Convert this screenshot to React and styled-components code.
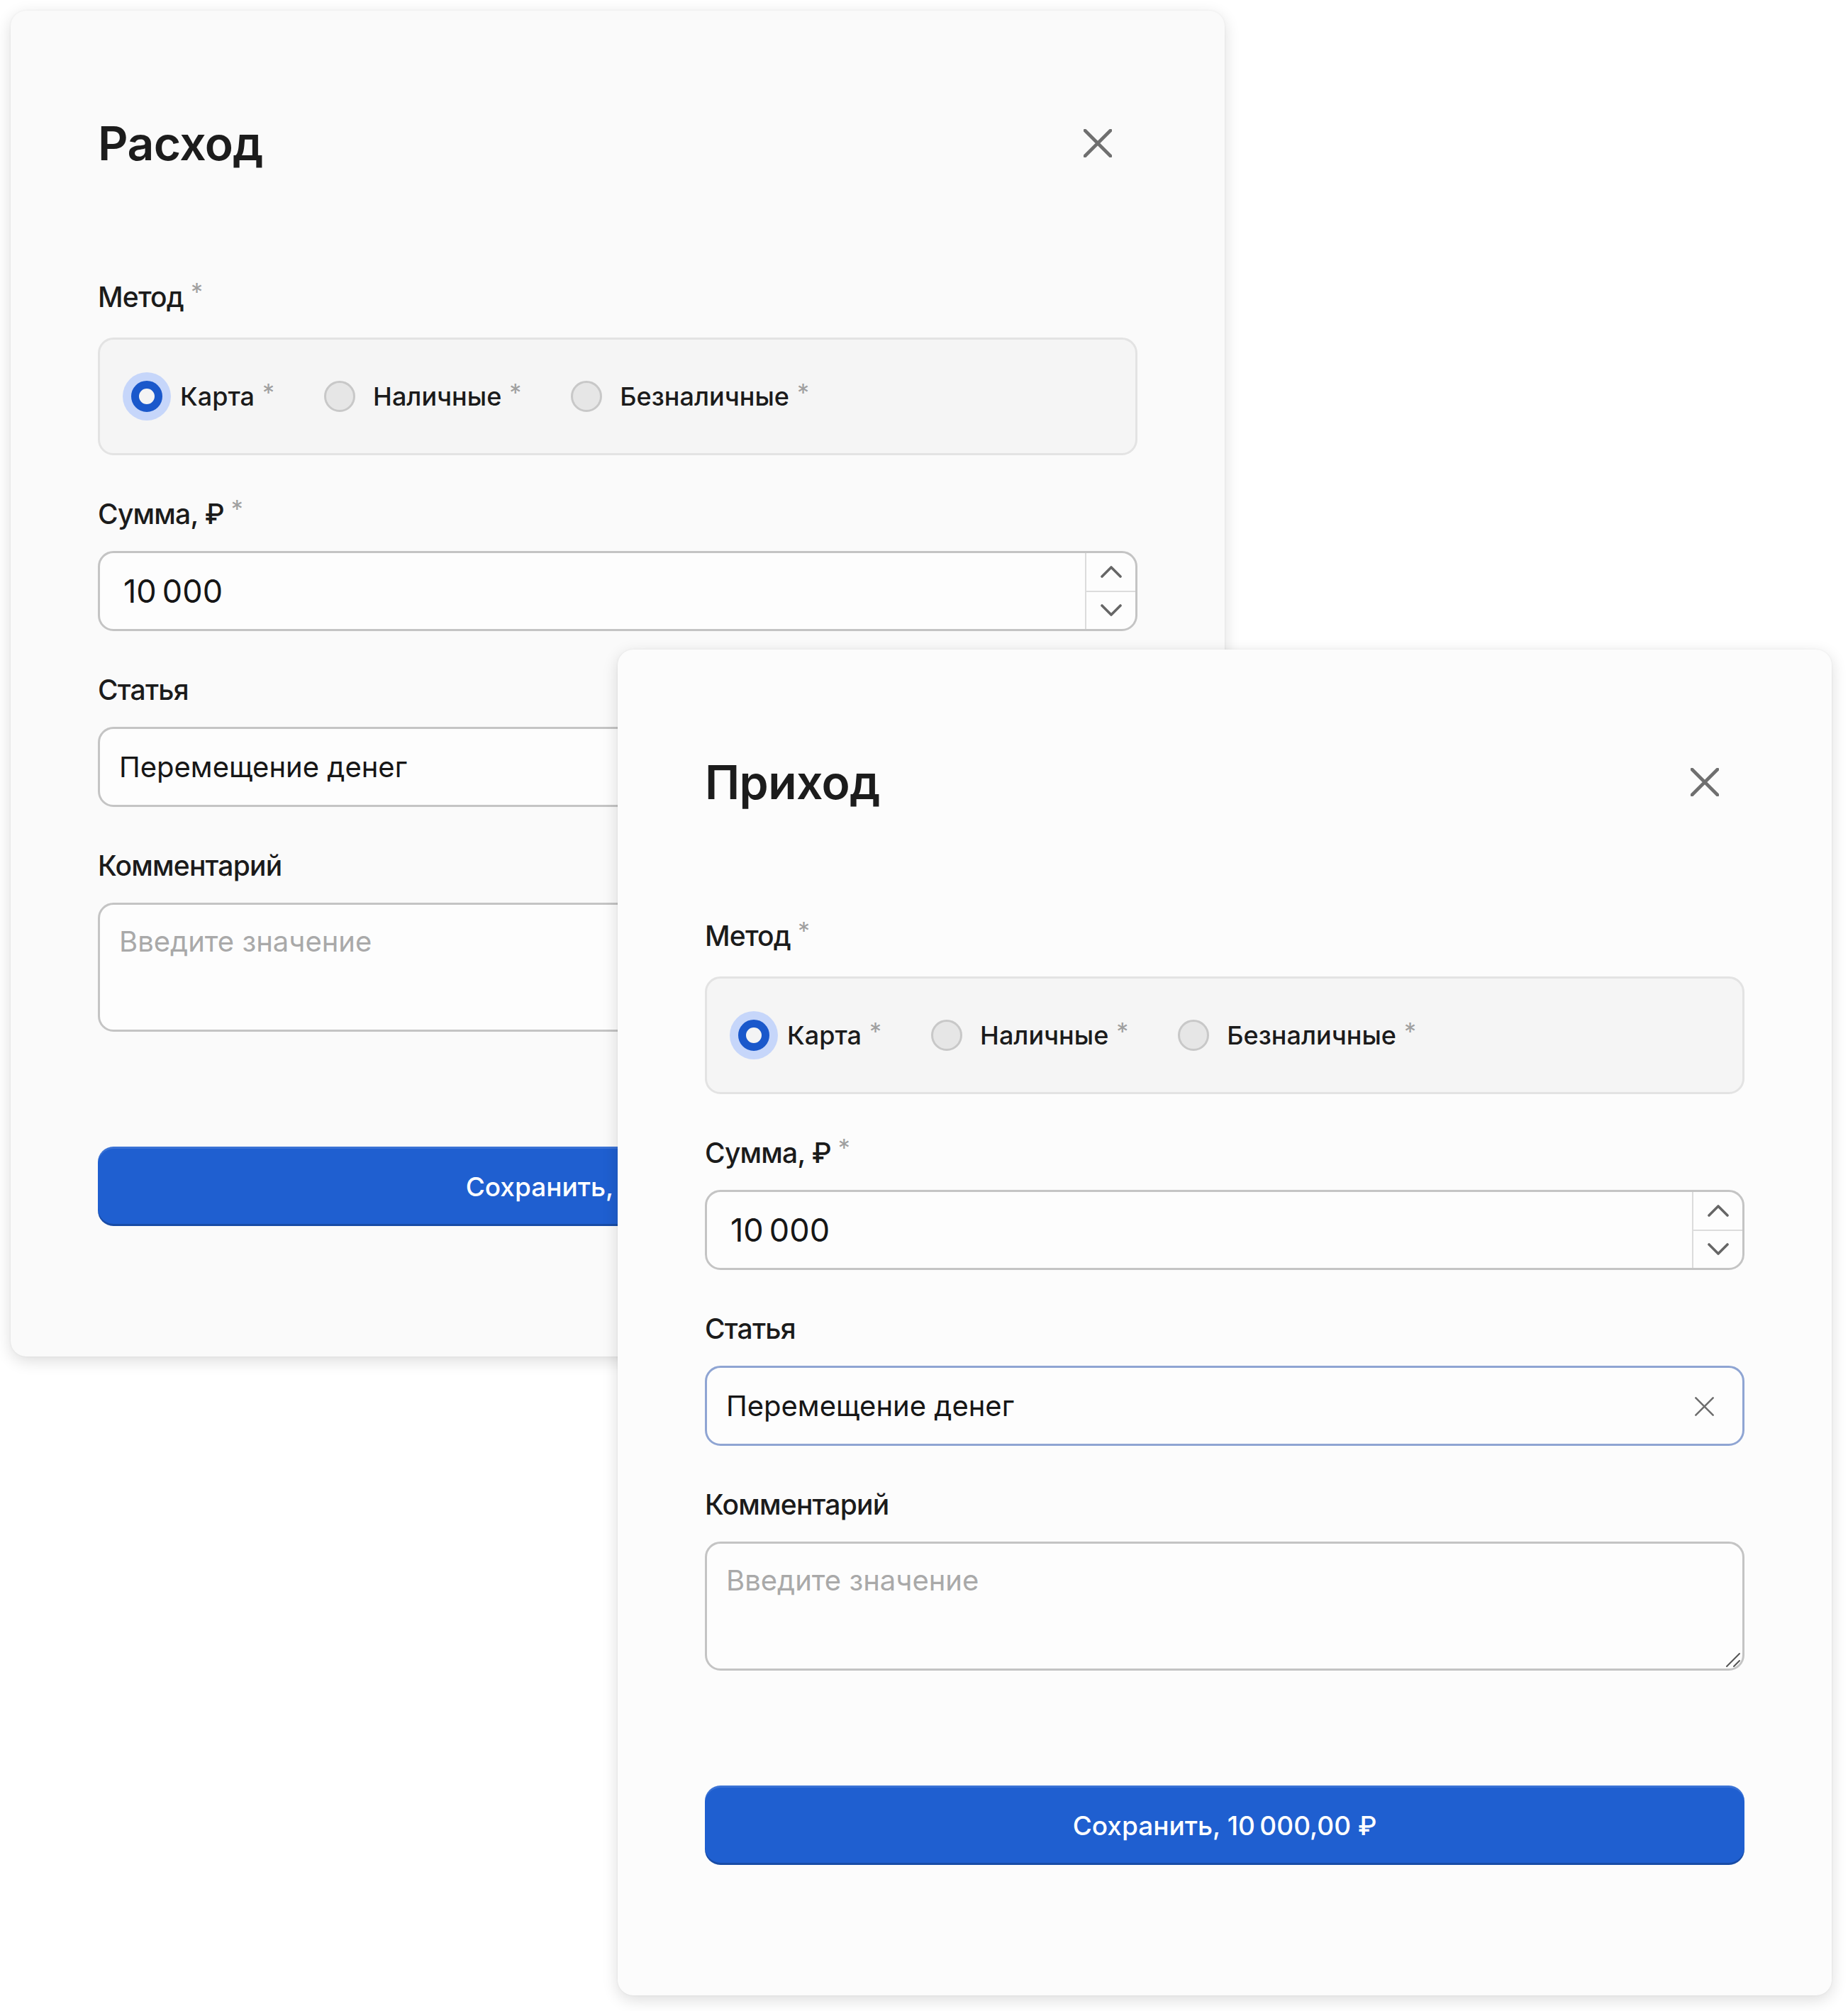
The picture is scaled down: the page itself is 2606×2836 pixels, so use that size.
import React from "react";
import styled, { createGlobalStyle } from "styled-components";

const GlobalStyle = createGlobalStyle`
  html, body {
    margin: 0;
    padding: 0;
    background: #ffffff;
  }
  body {
    font-family: Inter, "Noto Sans", "Liberation Sans", sans-serif;
    color: #1b1b1b;
  }
  * {
    box-sizing: border-box;
  }
`;

const Desk = styled.div`
  position: relative;
  width: 2606px;
  height: 2836px;
  overflow: hidden;
  background: #ffffff;
`;

const Window = styled.section`
  position: absolute;
  left: ${(p) => p.$x}px;
  top: ${(p) => p.$y}px;
  z-index: ${(p) => p.$z};
  width: 1712px;
  height: 1898px;
  padding: 131px 123px 0;
  display: flex;
  flex-direction: column;
  background: ${(p) => p.$bg};
  border-radius: 22px;
  box-shadow: 0 6px 22px rgba(0, 0, 0, 0.14), 0 0 3px rgba(0, 0, 0, 0.06);
`;

const Header = styled.header`
  height: 112px;
  margin-bottom: 137px;
  display: flex;
  align-items: center;
  justify-content: space-between;
`;

const Title = styled.h2`
  margin: 0;
  font-size: 66px;
  font-weight: 600;
  letter-spacing: -0.6px;
  color: #1c1c1c;
`;

const IconButton = styled.button`
  width: ${(p) => p.$size}px;
  height: ${(p) => p.$size}px;
  padding: 0;
  border: 0;
  background: none;
  display: flex;
  align-items: center;
  justify-content: center;
  color: #6f6f6f;
  cursor: pointer;
`;

const Fields = styled.div`
  display: flex;
  flex-direction: column;
  gap: 59px;
`;

const Field = styled.div`
  display: flex;
  flex-direction: column;
  gap: ${(p) => p.$gap || 28}px;
`;

const Label = styled.label`
  font-size: 39px;
  line-height: 48px;
  font-weight: 500;
  letter-spacing: -0.8px;
  color: #1b1b1b;
`;

const Req = styled.span`
  margin-left: ${(p) => p.$gap || 10}px;
  font-size: 34px;
  line-height: 1;
  font-weight: 400;
  letter-spacing: 0;
  vertical-align: top;
  color: #a0a0a0;
`;

const RadioBox = styled.div`
  height: 166px;
  padding: 0 44px;
  display: flex;
  align-items: center;
  gap: 70px;
  background: #f5f5f5;
  border: 3px solid #e3e3e3;
  border-radius: 22px;
`;

const RadioItem = styled.label`
  display: flex;
  align-items: center;
  gap: 25px;
  font-size: 36px;
  font-weight: 500;
  color: #1b1b1b;
  cursor: pointer;
`;

const RadioDot = styled.span`
  width: 44px;
  height: 44px;
  border-radius: 50%;
  flex-shrink: 0;
  background: ${(p) => (p.$checked ? "#f4f4f4" : "#e6e6e6")};
  border: ${(p) => (p.$checked ? "11px solid #1a58cb" : "3px solid #c8c8c8")};
  box-shadow: ${(p) => (p.$checked ? "0 0 0 12px #c6d6fa" : "none")};
`;

const InputBox = styled.div`
  height: 113px;
  display: flex;
  align-items: stretch;
  background: #fdfdfd;
  border: 3px solid ${(p) => (p.$focused ? "#8fa5d3" : "#c4c4c4")};
  border-radius: 22px;
  overflow: hidden;
`;

const TextInput = styled.input`
  flex: 1;
  min-width: 0;
  padding: 0 ${(p) => p.$pad || 27}px;
  border: 0;
  outline: none;
  background: transparent;
  font-family: inherit;
  font-size: ${(p) => p.$fs || 40}px;
  color: #161616;
`;

const Stepper = styled.div`
  width: 71px;
  display: flex;
  flex-direction: column;
  border-left: 2px solid #dcdcdc;
`;

const StepButton = styled.button`
  flex: 1;
  padding: 0;
  border: 0;
  background: none;
  display: flex;
  align-items: center;
  justify-content: center;
  color: #666666;

  & + & {
    border-top: 2px solid #dcdcdc;
  }
`;

const AreaWrap = styled.div`
  position: relative;
  display: flex;
`;

const TextArea = styled.textarea`
  flex: 1;
  height: 182px;
  padding: 27px 27px;
  resize: none;
  background: #fdfdfd;
  border: 3px solid #c4c4c4;
  border-radius: 22px;
  outline: none;
  font-family: inherit;
  font-size: 40px;
  color: #161616;

  &::placeholder {
    color: #a9a9a9;
  }
`;

const Grip = styled.svg`
  position: absolute;
  right: 4px;
  bottom: 4px;
  color: #555555;
  pointer-events: none;
`;

const Submit = styled.button`
  height: 112px;
  margin-top: 162px;
  border: 0;
  border-radius: 22px;
  background: #1f5fd0;
  box-shadow: inset 0 -3px 0 rgba(0, 0, 0, 0.2), inset 0 3px 0 rgba(255, 255, 255, 0.12);
  font-family: inherit;
  font-size: 37px;
  font-weight: 500;
  color: #ffffff;
  cursor: pointer;
`;

const Cross = ({ size, stroke }) => (
  <svg width={size} height={size} viewBox="0 0 40 40" fill="none">
    <path
      d="M2 2 38 38M38 2 2 38"
      stroke="currentColor"
      strokeWidth={stroke}
      strokeLinecap="round"
    />
  </svg>
);

const Chevron = ({ up }) => (
  <svg width="30" height="18" viewBox="0 0 30 18" fill="none">
    <path
      d={up ? "M2 16 15 3 28 16" : "M2 2 15 15 28 2"}
      stroke="currentColor"
      strokeWidth="3.6"
      strokeLinecap="round"
      strokeLinejoin="round"
    />
  </svg>
);

const methods = ["Карта", "Наличные", "Безналичные"];

const TransactionWindow = ({ title, x, y, z, bg, focused }) => (
  <Window $x={x} $y={y} $z={z} $bg={bg}>
    <Header>
      <Title>{title}</Title>
      <IconButton $size={112}>
        <Cross size={40} stroke={4.6} />
      </IconButton>
    </Header>

    <Fields>
      <Field $gap={33}>
        <Label>
          Метод<Req>*</Req>
        </Label>
        <RadioBox>
          {methods.map((m, i) => (
            <RadioItem key={m}>
              <RadioDot $checked={i === 0} />
              <span>
                {m}
                <Req $gap={11}>*</Req>
              </span>
            </RadioItem>
          ))}
        </RadioBox>
      </Field>

      <Field>
        <Label>
          Сумма, ₽<Req>*</Req>
        </Label>
        <InputBox>
          <TextInput readOnly value={"10\u202f000"} $pad={33} $fs={45} />
          <Stepper>
            <StepButton>
              <Chevron up />
            </StepButton>
            <StepButton>
              <Chevron />
            </StepButton>
          </Stepper>
        </InputBox>
      </Field>

      <Field>
        <Label>Статья</Label>
        <InputBox $focused={focused}>
          <TextInput readOnly value="Перемещение денег" />
          <IconButton $size={108}>
            <Cross size={27} stroke={3.8} />
          </IconButton>
        </InputBox>
      </Field>

      <Field>
        <Label>Комментарий</Label>
        <AreaWrap>
          <TextArea placeholder="Введите значение" />
          <Grip width="24" height="24" viewBox="0 0 24 24" fill="none">
            <path
              d="M3 22 21 4M13 22 21 14"
              stroke="currentColor"
              strokeWidth="2"
              strokeLinecap="round"
            />
          </Grip>
        </AreaWrap>
      </Field>
    </Fields>

    <Submit>Сохранить, 10&#8239;000,00 ₽</Submit>
  </Window>
);

export default function App() {
  return (
    <Desk>
      <GlobalStyle />
      <TransactionWindow title="Расход" x={15} y={15} z={1} bg="#fafafa" />
      <TransactionWindow title="Приход" x={871} y={916} z={2} bg="#fcfcfc" focused />
    </Desk>
  );
}
